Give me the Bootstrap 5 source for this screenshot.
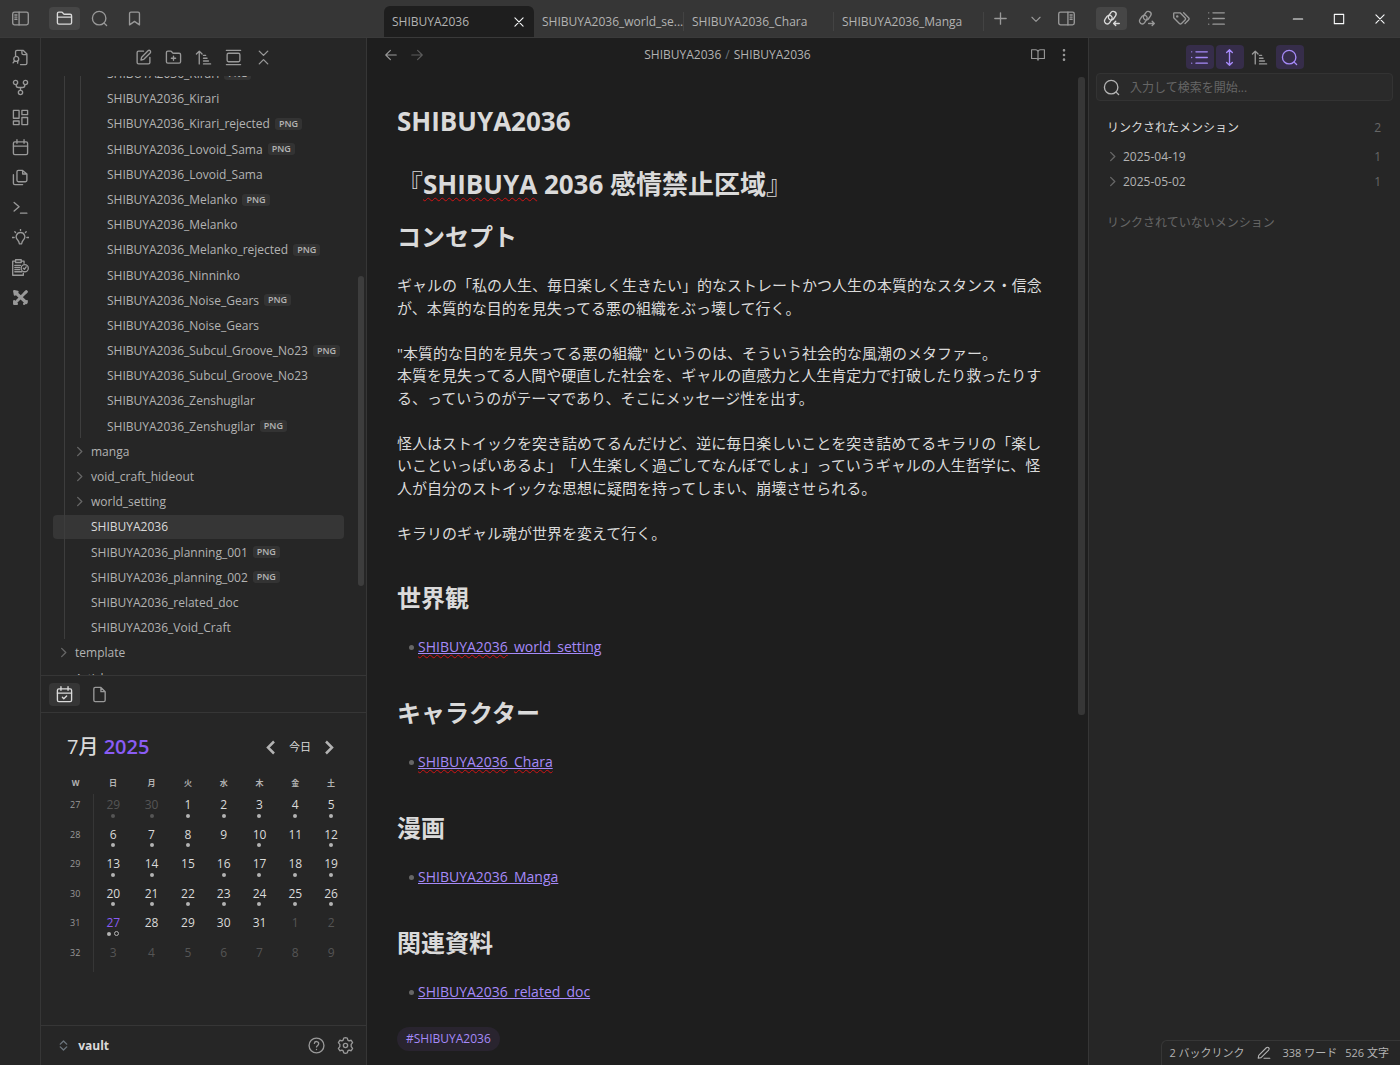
<!DOCTYPE html>
<html lang="ja">
<head>
<meta charset="utf-8">
<meta name="viewport" content="width=device-width, initial-scale=1">
<title>SHIBUYA2036 - vault</title>
<link rel="stylesheet" href="https://cdn.jsdelivr.net/npm/bootstrap@5.3.0/dist/css/bootstrap.min.css">
<style>
:root{--bg1:#1e1e1e;--bg2:#262626;--line:#363636;--txt:#dadada;--muted:#b3b3b3;--faint:#666;--accent:#8a5cf5;--link:#a68af9}
body{font-family:"Open Sans","Noto Sans CJK JP",sans-serif;font-size:12px;line-height:1.5;background:var(--bg1);color:var(--txt);text-spacing-trim:space-all}
button{font:inherit;color:inherit;background:none;border:0;padding:0}
a{color:inherit;text-decoration:none}
.ico{width:17px;height:17px;fill:none;stroke:currentColor;stroke-width:1.9;stroke-linecap:round;stroke-linejoin:round;display:block;flex:none}
.ico-s{width:14px;height:14px}
.ico-xs{width:11px;height:11px;stroke-width:3}
.ibtn{display:flex;align-items:center;justify-content:center;color:#999;border-radius:4px;flex:none}
.tabi{width:31px;height:23px}
.tabi.on{background:#464646;color:var(--txt)}
.lower .tabi.on{background:var(--line)}
.topbar{height:38px;background:#363636;border-bottom:1px solid #3a3a3a}
.toggle{margin:0 13px 0 5px}
.tabs{padding-left:17px}
.tabtools{padding-right:6px}
.winctl .ibtn{width:41px;height:23px}
.leftw{width:367px}
.rightw{width:312px}
.ribbon{width:41px;border-right:1px solid var(--line);background:var(--bg2);padding-top:10px;gap:11px}
.ribbon .ibtn{width:30px;height:19px}
.side{background:var(--bg2);border-right:1px solid var(--line)}
.tab{width:150px;height:31px;padding-left:8px;color:var(--muted)}
.tab.live{background:var(--bg1);border-radius:6px 6px 0 0}
.tab.sep::after{content:"";width:1px;height:19px;background:#434343;margin-left:auto}
.thead{height:38px;gap:13px}
.tree{margin-top:-14px;padding-left:12px}
.trow{display:flex;align-items:center;line-height:1.6;padding:2px 0;margin-bottom:2px;color:var(--muted);border-radius:4px;white-space:nowrap}
.trow.live{background:var(--line);color:var(--txt)}
.lv1{padding-left:22px}.lv2{padding-left:38px}.lv3{padding-left:54px}
.fold1{padding-left:5px}.fold2{padding-left:21px}
.fold1 svg,.fold2 svg{margin-right:6px;color:#666}
.kids{position:relative}
.kids::before{content:"";position:absolute;top:0;bottom:0;width:1px;background:#3d3d3d}
.k1::before{left:11px}.k2::before{left:27px}
.ext{font-size:9px;font-weight:600;line-height:12px;background:#333;border-radius:3px;padding:0 4px;margin-left:5px}
.treebox{height:599px}
.gutter{width:22px;padding:200px 2px 0 0}
.thumb{width:6px;height:310px;border-radius:3px;background:#3d3d3d}
.lower{height:38px;border-top:1px solid var(--line);border-bottom:1px solid var(--line);padding-left:8px;gap:4px}
.cal{padding:18px 17px 0}
.calhead{padding:0 11px 0 9px}
.cal h2{font-size:20px;font-weight:500;line-height:32px;margin:0}
.cal h2 span{color:var(--accent);font-weight:600}
.now{font-size:11px;margin:0 13px}
.caltab{width:100%;table-layout:fixed;text-align:center;margin-top:12px}
.caltab th{font-size:8px;line-height:16px;height:19px;vertical-align:top;color:var(--muted);font-weight:700;padding:0}
.caltab td{padding:3px 0 5px;line-height:1.3;vertical-align:top}
.caltab td.wk{font-size:9px;line-height:16px;color:#999;border-right:1px solid var(--line)}
.caltab .out{color:#555}
.caltab .today{color:var(--accent)}
.dots{height:6px;display:flex;align-items:center;justify-content:center;gap:3px}
.dots i{width:4px;height:4px;border-radius:50%;background:var(--muted)}
.dots i.ring{width:5px;height:5px;background:none;border:1px solid var(--muted)}
.out .dots i{background:#555}
.vault{height:40px;border-top:1px solid var(--line);padding:0 12px 0 17px}
.mhead{height:34px;padding:0 17px;color:var(--muted)}
.note{padding:33px 30px 0;font-size:15px}
.note h1{font-size:26px;font-weight:700;line-height:32px;margin:0 0 31px}
.note h1 span.br{font-weight:400}
.note h1.second{margin-bottom:22px}
.note h2{font-size:24px;font-weight:700;line-height:29px;margin:0 0 23px}
.note p{margin:0 0 1.5em}
.note section{margin-top:39px}
.note ul{margin:0;padding:0;list-style:none}
.note li{font-size:14px;line-height:24px;display:flex;align-items:center;gap:4px;padding-left:12px}
.note li::before{content:"";width:5px;height:5px;border-radius:50%;background:#666}
.note li a{color:var(--link);text-decoration:underline}
.sp{text-decoration:underline wavy #d01414 1px;text-underline-offset:3px}
.note li .sp{text-underline-offset:2px}
.note .last{margin-bottom:0}
.hashtag{display:inline-block;margin-top:23px;height:24px;line-height:24px;border-radius:12px;padding:0 9px;font-size:12px;background:#29242f;color:var(--link)}
.mgutter{width:12px;padding:5px 0 0 2px}
.mthumb{width:7px;height:638px;border-radius:3px;background:#363636}
.pane{background:var(--bg2);border-left:1px solid var(--line)}
.ptool{gap:2px;padding-top:7px}
.ptool .ibtn{width:28px;height:24px}
.ptool .on{background:#362d4a;color:var(--link)}
.find{margin:4px 7px 0 7px;height:28px;border:1px solid #333;border-radius:4px;background:#2a2a2a;padding:0 6px;gap:10px;color:var(--muted)}
.find input{background:none;border:0;outline:0;color:var(--txt);font:inherit;padding:2px 0 0}
.find input::placeholder{color:#666;opacity:1}
.ment{padding:14px 19px 0 18px}
.ment>div{height:25px;color:var(--muted)}
.ment>div:first-child{color:var(--txt)}
.ment svg{margin-right:5px;color:var(--faint)}
.cnt,.ment>div.dim{color:var(--faint)}
.status{border:1px solid var(--line);border-right:0;border-bottom:0;border-radius:6px 0 0 0;height:25px;padding:0 11px 0 7px;color:var(--muted);font-size:11px}
.status svg{margin:0 12px}
</style>
<script src="https://cdn.jsdelivr.net/npm/bootstrap@5.3.0/dist/js/bootstrap.bundle.min.js"></script>
</head>
<body class="vh-100 d-flex flex-column overflow-hidden">
<svg class="d-none" xmlns="http://www.w3.org/2000/svg">
<symbol id="panel-l" viewBox="0 0 24 24"><rect x="1" y="3" width="22" height="18" rx="2.5"/><path d="M10 3v18M4 7h3M4 10h3M4 13h3"/></symbol>
<symbol id="panel-r" viewBox="0 0 24 24"><rect x="1" y="3" width="22" height="18" rx="2.5"/><path d="M14 3v18M17 7h3M17 10h3M17 13h3"/></symbol>
<symbol id="folder" viewBox="0 0 24 24"><path d="M4 20h16a2 2 0 0 0 2-2V8a2 2 0 0 0-2-2h-7.900a2 2 0 0 1-1.700-.9l-.8-1.200A2 2 0 0 0 7.900 3H4a2 2 0 0 0-2 2v13a2 2 0 0 0 2 2ZM2 10h20"/></symbol>
<symbol id="search" viewBox="0 0 24 24"><circle cx="11.500" cy="11.500" r="9.500"/><path d="m18.500 18.500 3.500 3.500"/></symbol>
<symbol id="mark-i" viewBox="0 0 24 24"><path d="m19 21-7-5-7 5V5a2 2 0 0 1 2-2h10a2 2 0 0 1 2 2z"/></symbol>
<symbol id="filesearch" viewBox="0 0 24 24"><path d="M14 2v4a2 2 0 0 0 2 2h5M5 9V4a2 2 0 0 1 2-2h9l5 5v13a2 2 0 0 1-2 2h-7"/><circle cx="6" cy="14" r="3.500"/><path d="m3.500 17-2 2.500M8 17v3"/></symbol>
<symbol id="fork" viewBox="0 0 24 24"><circle cx="12" cy="19" r="3"/><circle cx="5" cy="5" r="3"/><circle cx="19" cy="5" r="3"/><path d="M18 8v1a3 3 0 0 1-3 3H9a3 3 0 0 1-3-3V8M12 12v4"/></symbol>
<symbol id="dash" viewBox="0 0 24 24"><rect x="2" y="2" width="8" height="11"/><rect x="14" y="2" width="8" height="6"/><rect x="14" y="12" width="8" height="10"/><rect x="2" y="17" width="8" height="5"/></symbol>
<symbol id="calendar" viewBox="0 0 24 24"><rect x="2" y="4" width="20" height="18" rx="2"/><path d="M7 1v5M17 1v5M2 10h20"/></symbol>
<symbol id="files" viewBox="0 0 24 24"><path d="M15 2H9a2 2 0 0 0-2 2v12a2 2 0 0 0 2 2h10a2 2 0 0 0 2-2V7zM15 2v5h5M2 8v12a2 2 0 0 0 2 2h11"/></symbol>
<symbol id="term" viewBox="0 0 24 24"><path d="m3 17 7-6-7-6M12 20h9"/></symbol>
<symbol id="bulb" viewBox="0 0 24 24"><path d="M12 5a6 6 0 0 0-4 10.500c1.500 1.500 2 3 2.500 5.500h3c.5-2.500 1-4 2.500-5.500A6 6 0 0 0 12 5ZM12 0v2M4 4l1 1M20 4l-1 1M0 12h3M21 12h3"/></symbol>
<symbol id="cliplist" viewBox="0 0 24 24"><path d="M16 20v3H1V3h4M13 3h4v3M5 1h8v4H5zM4 9h8M4 12h7M4 15h7M4 18h10"/><circle cx="18" cy="13" r="5"/><path d="m16 13 1.500 1.500L20 11"/></symbol>
<symbol id="tools" viewBox="0 0 24 24"><path d="M6 6 20 19" stroke-width="4.500"/><path d="M19 5 5 19" stroke-width="4"/><path d="M3 3l5 1-4 4ZM20 3l1 1-4 3ZM17 21l4-4M3 17v4h4" stroke-width="3"/></symbol>
<symbol id="edit" viewBox="0 0 24 24"><path d="M12 3H5a2 2 0 0 0-2 2v14a2 2 0 0 0 2 2h14a2 2 0 0 0 2-2v-7M18.400 2.600a2.100 2.100 0 0 1 3 3L12.400 14.600 8.500 15.500l.9-3.900Z"/></symbol>
<symbol id="fplus" viewBox="0 0 24 24"><path d="M4 20h16a2 2 0 0 0 2-2V8a2 2 0 0 0-2-2h-7.900a2 2 0 0 1-1.700-.9l-.8-1.200A2 2 0 0 0 7.900 3H4a2 2 0 0 0-2 2v13a2 2 0 0 0 2 2ZM12 10v6M9 13h6"/></symbol>
<symbol id="sort" viewBox="0 0 24 24"><path d="m2 7 4-4 4 4M6 3v18M12 9h3M12 13h5M12 17h7M12 21h10"/></symbol>
<symbol id="gallery" viewBox="0 0 24 24"><rect x="3" y="6" width="18" height="12" rx="2"/><path d="M2 2h20M2 22h20"/></symbol>
<symbol id="collapse" viewBox="0 0 24 24"><path d="m6 21 6-6 6 6M6 3l6 6 6-6"/></symbol>
<symbol id="chev" viewBox="0 0 24 24"><path d="m8 3 9 9-9 9"/></symbol>
<symbol id="down" viewBox="0 0 24 24"><path d="m5 9 7 7 7-7"/></symbol>
<symbol id="x" viewBox="0 0 24 24"><path d="M5 5l14 14M19 5 5 19"/></symbol>
<symbol id="plus" viewBox="0 0 24 24"><path d="M4 12h16M12 4v16"/></symbol>
<symbol id="al" viewBox="0 0 24 24"><path d="m11 4-8 8 8 8M3 12h18"/></symbol>
<symbol id="ar" viewBox="0 0 24 24"><path d="m13 4 8 8-8 8M21 12H3"/></symbol>
<symbol id="book" viewBox="0 0 24 24"><path d="M1 3h7a4 4 0 0 1 4 4v14a3 3 0 0 0-3-3H1zM23 3h-7a4 4 0 0 0-4 4v14a3 3 0 0 1 3-3h8z"/></symbol>
<symbol id="more" viewBox="0 0 24 24"><g fill="currentColor"><circle cx="12" cy="4" r="1.300"/><circle cx="12" cy="12" r="1.300"/><circle cx="12" cy="20" r="1.300"/></g></symbol>
<symbol id="chain" viewBox="0 0 24 24"><rect x="9" y="1.500" width="8" height="13" rx="4" transform="rotate(35 13 8)"/><rect x="3.500" y="7" width="8" height="13" rx="4" transform="rotate(35 7.500 13.500)"/></symbol>
<symbol id="lin" viewBox="0 0 24 24"><use href="#chain"/><path d="M23 19h-8M18 16l-3 3 3 3"/></symbol>
<symbol id="lout" viewBox="0 0 24 24"><use href="#chain"/><path d="M15 19h8M20 16l3 3-3 3"/></symbol>
<symbol id="tags" viewBox="0 0 24 24"><path d="M1 5v6l8 8c1 1 2 1 3 0l5-5c1-1 1-2 0-3L10 4H2a1 1 0 0 0-1 1ZM15 4l7 7c1 1 1 2 0 3l-5 5"/><circle cx="6" cy="9" r=".8"/></symbol>
<symbol id="list" viewBox="0 0 24 24"><path d="M7 4h16M7 12h16M7 20h16M1 4h.01M1 12h.01M1 20h.01"/></symbol>
<symbol id="updown" viewBox="0 0 24 24"><path d="m8 5 4-4 4 4M8 19l4 4 4-4M12 1v22"/></symbol>
<symbol id="min" viewBox="0 0 24 24"><path d="M4 12h16"/></symbol>
<symbol id="max" viewBox="0 0 24 24"><path d="M4 4h16v16H4z"/></symbol>
<symbol id="calcheck" viewBox="0 0 24 24"><rect x="2" y="4" width="20" height="18" rx="2"/><path d="M7 1v5M17 1v5M2 10h20M9 16l2 2 4-4"/></symbol>
<symbol id="file" viewBox="0 0 24 24"><path d="M14 2H6a2 2 0 0 0-2 2v16a2 2 0 0 0 2 2h12a2 2 0 0 0 2-2V8zM14 2v6h6"/></symbol>
<symbol id="ud" viewBox="0 0 24 24"><path d="m5 15 7 7 7-7M5 9l7-7 7 7"/></symbol>
<symbol id="help" viewBox="0 0 24 24"><circle cx="12" cy="12" r="10.500"/><path d="M9 9a3 3 0 0 1 6 1c0 2-3 2.500-3 4M12 17.500v.1"/></symbol>
<symbol id="gear" viewBox="0 0 24 24"><path d="m12 1 2.500.5.8 3 1.700 1 3-.9 2 3.400-2 2.500v3l2 2.500-2 3.400-3-.9-1.700 1-.8 3L12 23l-2.500-.5-.8-3-1.700-1-3 .9-2-3.400 2-2.500v-3L2 8l2-3.400 3 .9 1.700-1 .8-3Z"/><circle cx="12" cy="12" r="3"/></symbol>
<symbol id="pen" viewBox="0 0 24 24"><path d="M12 21h10M16 3a2.500 2.500 0 0 1 4 4L7 20l-5 1 1-5Z"/></symbol>
</svg>

<header class="topbar d-flex flex-shrink-0">
  <div class="leftw d-flex align-items-center flex-shrink-0">
    <button class="ibtn tabi toggle" aria-label="サイドバー"><svg class="ico"><use href="#panel-l"/></svg></button>
    <button class="ibtn tabi on me-1" aria-label="ファイル"><svg class="ico"><use href="#folder"/></svg></button>
    <button class="ibtn tabi me-1" aria-label="検索"><svg class="ico"><use href="#search"/></svg></button>
    <button class="ibtn tabi" aria-label="ブックマーク"><svg class="ico"><use href="#mark-i"/></svg></button>
  </div>
  <nav class="tabs d-flex flex-grow-1 align-items-end">
    <div class="tab live d-flex align-items-center"><a href="#">SHIBUYA2036</a><button class="ibtn ms-auto me-2" aria-label="閉じる"><svg class="ico ico-s text-light"><use href="#x"/></svg></button></div>
    <div class="tab sep d-flex align-items-center"><a href="#" class="text-nowrap">SHIBUYA2036_world_se...</a></div>
    <div class="tab sep d-flex align-items-center"><a href="#">SHIBUYA2036_Chara</a></div>
    <div class="tab sep d-flex align-items-center"><a href="#">SHIBUYA2036_Manga</a></div>
    <div class="tabtools d-flex align-items-center align-self-center ms-auto">
      <button class="ibtn tabi me-1" aria-label="新規タブ"><svg class="ico"><use href="#plus"/></svg></button>
      <button class="ibtn tabi" aria-label="タブ一覧"><svg class="ico ico-s"><use href="#down"/></svg></button>
      <button class="ibtn tabi" aria-label="右サイドバー"><svg class="ico"><use href="#panel-r"/></svg></button>
    </div>
  </nav>
  <div class="rightw d-flex align-items-center flex-shrink-0 ps-2">
    <button class="ibtn tabi on me-1" aria-label="バックリンク"><svg class="ico"><use href="#lin"/></svg></button>
    <button class="ibtn tabi me-1" aria-label="外部リンク"><svg class="ico"><use href="#lout"/></svg></button>
    <button class="ibtn tabi me-1" aria-label="タグ"><svg class="ico"><use href="#tags"/></svg></button>
    <button class="ibtn tabi" aria-label="アウトライン"><svg class="ico"><use href="#list"/></svg></button>
    <div class="winctl d-flex ms-auto text-light">
      <button class="ibtn text-reset" aria-label="最小化"><svg class="ico ico-s"><use href="#min"/></svg></button>
      <button class="ibtn text-reset" aria-label="最大化"><svg class="ico ico-s"><use href="#max"/></svg></button>
      <button class="ibtn text-reset" aria-label="終了"><svg class="ico ico-s"><use href="#x"/></svg></button>
    </div>
  </div>
</header>

<div class="d-flex flex-grow-1 overflow-hidden">
  <div class="leftw d-flex flex-shrink-0">
    <nav class="ribbon d-flex flex-column align-items-center flex-shrink-0">
      <button class="ibtn" aria-label="クイックスイッチャー"><svg class="ico"><use href="#filesearch"/></svg></button>
      <button class="ibtn" aria-label="グラフ"><svg class="ico"><use href="#fork"/></svg></button>
      <button class="ibtn" aria-label="キャンバス"><svg class="ico"><use href="#dash"/></svg></button>
      <button class="ibtn" aria-label="デイリーノート"><svg class="ico"><use href="#calendar"/></svg></button>
      <button class="ibtn" aria-label="テンプレート"><svg class="ico"><use href="#files"/></svg></button>
      <button class="ibtn" aria-label="コマンド"><svg class="ico"><use href="#term"/></svg></button>
      <button class="ibtn" aria-label="ヒント"><svg class="ico"><use href="#bulb"/></svg></button>
      <button class="ibtn" aria-label="タスク"><svg class="ico"><use href="#cliplist"/></svg></button>
      <button class="ibtn" aria-label="ツール"><svg class="ico"><use href="#tools"/></svg></button>
    </nav>
    <aside class="side d-flex flex-column flex-grow-1">
      <div class="thead d-flex align-items-center justify-content-center flex-shrink-0">
        <button class="ibtn" aria-label="新規ノート"><svg class="ico"><use href="#edit"/></svg></button>
        <button class="ibtn" aria-label="新規フォルダ"><svg class="ico"><use href="#fplus"/></svg></button>
        <button class="ibtn" aria-label="並べ替え"><svg class="ico"><use href="#sort"/></svg></button>
        <button class="ibtn" aria-label="自動表示"><svg class="ico"><use href="#gallery"/></svg></button>
        <button class="ibtn" aria-label="折りたたむ"><svg class="ico"><use href="#collapse"/></svg></button>
      </div>
      <div class="treebox d-flex overflow-hidden flex-shrink-0">
        <div class="tree flex-grow-1">
          <div class="kids k1">
            <div class="kids k2">
              <a href="#" class="trow lv3">SHIBUYA2036_Kirari<span class="ext">PNG</span></a>
              <a href="#" class="trow lv3">SHIBUYA2036_Kirari</a>
              <a href="#" class="trow lv3">SHIBUYA2036_Kirari_rejected<span class="ext">PNG</span></a>
              <a href="#" class="trow lv3">SHIBUYA2036_Lovoid_Sama<span class="ext">PNG</span></a>
              <a href="#" class="trow lv3">SHIBUYA2036_Lovoid_Sama</a>
              <a href="#" class="trow lv3">SHIBUYA2036_Melanko<span class="ext">PNG</span></a>
              <a href="#" class="trow lv3">SHIBUYA2036_Melanko</a>
              <a href="#" class="trow lv3">SHIBUYA2036_Melanko_rejected<span class="ext">PNG</span></a>
              <a href="#" class="trow lv3">SHIBUYA2036_Ninninko</a>
              <a href="#" class="trow lv3">SHIBUYA2036_Noise_Gears<span class="ext">PNG</span></a>
              <a href="#" class="trow lv3">SHIBUYA2036_Noise_Gears</a>
              <a href="#" class="trow lv3">SHIBUYA2036_Subcul_Groove_No23<span class="ext">PNG</span></a>
              <a href="#" class="trow lv3">SHIBUYA2036_Subcul_Groove_No23</a>
              <a href="#" class="trow lv3">SHIBUYA2036_Zenshugilar</a>
              <a href="#" class="trow lv3">SHIBUYA2036_Zenshugilar<span class="ext">PNG</span></a>
            </div>
            <a href="#" class="trow fold2"><svg class="ico ico-xs"><use href="#chev"/></svg>manga</a>
            <a href="#" class="trow fold2"><svg class="ico ico-xs"><use href="#chev"/></svg>void_craft_hideout</a>
            <a href="#" class="trow fold2"><svg class="ico ico-xs"><use href="#chev"/></svg>world_setting</a>
            <a href="#" class="trow lv2 live">SHIBUYA2036</a>
            <a href="#" class="trow lv2">SHIBUYA2036_planning_001<span class="ext">PNG</span></a>
            <a href="#" class="trow lv2">SHIBUYA2036_planning_002<span class="ext">PNG</span></a>
            <a href="#" class="trow lv2">SHIBUYA2036_related_doc</a>
            <a href="#" class="trow lv2">SHIBUYA2036_Void_Craft</a>
          </div>
          <a href="#" class="trow fold1"><svg class="ico ico-xs"><use href="#chev"/></svg>template</a>
          <a href="#" class="trow lv1">Article</a>
        </div>
        <div class="gutter d-flex justify-content-end flex-shrink-0"><div class="thumb"></div></div>
      </div>
      <div class="lower d-flex align-items-center flex-shrink-0">
        <button class="ibtn tabi on" aria-label="カレンダー"><svg class="ico"><use href="#calcheck"/></svg></button>
        <button class="ibtn tabi" aria-label="ファイル"><svg class="ico"><use href="#file"/></svg></button>
      </div>
      <div class="cal flex-grow-1">
        <div class="calhead d-flex align-items-center">
          <h2 class="me-auto">7月 <span>2025</span></h2>
          <button aria-label="前月"><svg class="d-block" width="10" height="15" viewBox="0 0 10 15" fill="none" stroke="#b3b3b3" stroke-width="2.500"><path d="M8 1.500 2 7.500l6 6"/></svg></button>
          <button class="now">今日</button>
          <button class="me-1" aria-label="翌月"><svg class="d-block" width="10" height="15" viewBox="0 0 10 15" fill="none" stroke="#b3b3b3" stroke-width="2.500"><path d="m2 1.500 6 6-6 6"/></svg></button>
        </div>
        <table class="caltab">
          <colgroup><col style="width:35px"><col style="width:40px"><col style="width:37px"><col><col><col><col><col></colgroup>
          <thead><tr><th>W</th><th>日</th><th>月</th><th>火</th><th>水</th><th>木</th><th>金</th><th>土</th></tr></thead>
          <tbody>
            <tr><td class="wk">27</td><td class="out">29<div class="dots"><i></i></div></td><td class="out">30<div class="dots"><i></i></div></td><td>1<div class="dots"><i></i></div></td><td>2<div class="dots"><i></i></div></td><td>3<div class="dots"><i></i></div></td><td>4<div class="dots"><i></i></div></td><td>5<div class="dots"><i></i></div></td></tr>
            <tr><td class="wk">28</td><td>6<div class="dots"><i></i></div></td><td>7<div class="dots"><i></i></div></td><td>8<div class="dots"><i></i></div></td><td>9</td><td>10<div class="dots"><i></i></div></td><td>11</td><td>12<div class="dots"><i></i></div></td></tr>
            <tr><td class="wk">29</td><td>13<div class="dots"><i></i></div></td><td>14<div class="dots"><i></i></div></td><td>15</td><td>16<div class="dots"><i></i></div></td><td>17<div class="dots"><i></i></div></td><td>18<div class="dots"><i></i></div></td><td>19<div class="dots"><i></i></div></td></tr>
            <tr><td class="wk">30</td><td>20<div class="dots"><i></i></div></td><td>21<div class="dots"><i></i></div></td><td>22<div class="dots"><i></i></div></td><td>23<div class="dots"><i></i></div></td><td>24<div class="dots"><i></i></div></td><td>25<div class="dots"><i></i></div></td><td>26<div class="dots"><i></i></div></td></tr>
            <tr><td class="wk">31</td><td class="today">27<div class="dots"><i></i><i class="ring"></i></div></td><td>28</td><td>29</td><td>30</td><td>31</td><td class="out">1</td><td class="out">2</td></tr>
            <tr><td class="wk">32</td><td class="out">3<div class="dots"></div></td><td class="out">4</td><td class="out">5</td><td class="out">6</td><td class="out">7</td><td class="out">8</td><td class="out">9</td></tr>
          </tbody>
        </table>
      </div>
      <div class="vault d-flex align-items-center flex-shrink-0">
        <svg class="ico ico-xs text-secondary"><use href="#ud"/></svg>
        <button class="ms-2 me-auto fw-bold">&#8202;vault</button>
        <button class="ibtn me-2" aria-label="ヘルプ"><svg class="ico"><use href="#help"/></svg></button>
        <button class="ibtn ms-1" aria-label="設定"><svg class="ico"><use href="#gear"/></svg></button>
      </div>
    </aside>
  </div>

  <main class="flex-grow-1 d-flex flex-column overflow-hidden">
    <div class="mhead d-flex align-items-center flex-shrink-0">
      <button class="ibtn" aria-label="戻る"><svg class="ico ico-s"><use href="#al"/></svg></button>
      <button class="ibtn ms-2 ps-1 opacity-50" aria-label="進む"><svg class="ico ico-s"><use href="#ar"/></svg></button>
      <div class="flex-grow-1 text-center"><a href="#">SHIBUYA2036</a><span class="px-1 text-secondary">/</span><span>SHIBUYA2036</span></div>
      <button class="ibtn me-2" aria-label="閲覧"><svg class="ico ico-s"><use href="#book"/></svg></button>
      <button class="ibtn ms-1" aria-label="その他"><svg class="ico ico-s"><use href="#more"/></svg></button>
    </div>
    <div class="d-flex flex-grow-1 overflow-hidden">
      <article class="note flex-grow-1">
        <h1>SHIBUYA2036</h1>
        <h1 class="second"><span class="br">『</span><span class="sp">SHIBUYA</span> 2036 感情禁止区域<span class="br">』</span></h1>
        <h2>コンセプト</h2>
        <p>ギャルの「私の人生、毎日楽しく生きたい」的なストレートかつ人生の本質的なスタンス・信念が、本質的な目的を見失ってる悪の組織をぶっ壊して行く。</p>
        <p>"本質的な目的を見失ってる悪の組織" というのは、そういう社会的な風潮のメタファー。<br>本質を見失ってる人間や硬直した社会を、ギャルの直感力と人生肯定力で打破したり救ったりする、っていうのがテーマであり、そこにメッセージ性を出す。</p>
        <p>怪人はストイックを突き詰めてるんだけど、逆に毎日楽しいことを突き詰めてるキラリの「楽しいこといっぱいあるよ」「人生楽しく過ごしてなんぼでしょ」っていうギャルの人生哲学に、怪人が自分のストイックな思想に疑問を持ってしまい、崩壊させられる。</p>
        <p class="last">キラリのギャル魂が世界を変えて行く。</p>
        <section><h2>世界観</h2><ul><li><a href="#"><span class="sp">SHIBUYA2036</span>_world_setting</a></li></ul></section>
        <section><h2>キャラクター</h2><ul><li><a href="#"><span class="sp">SHIBUYA2036</span>_<span class="sp">Chara</span></a></li></ul></section>
        <section><h2>漫画</h2><ul><li><a href="#">SHIBUYA2036_Manga</a></li></ul></section>
        <section><h2>関連資料</h2><ul><li><a href="#">SHIBUYA2036_related_doc</a></li></ul></section>
        <a href="#" class="hashtag">#SHIBUYA2036</a>
      </article>
      <div class="mgutter flex-shrink-0"><div class="mthumb"></div></div>
    </div>
  </main>

  <aside class="pane rightw d-flex flex-column flex-shrink-0">
    <div class="ptool d-flex justify-content-center">
      <button class="ibtn on" aria-label="折りたたむ"><svg class="ico"><use href="#list"/></svg></button>
      <button class="ibtn on" aria-label="展開"><svg class="ico"><use href="#updown"/></svg></button>
      <button class="ibtn" aria-label="並べ替え"><svg class="ico"><use href="#sort"/></svg></button>
      <button class="ibtn on" aria-label="検索"><svg class="ico"><use href="#search"/></svg></button>
    </div>
    <label class="find d-flex align-items-center"><svg class="ico"><use href="#search"/></svg><input class="flex-grow-1" type="text" placeholder="入力して検索を開始..." aria-label="検索"></label>
    <div class="ment">
      <div class="d-flex align-items-center justify-content-between mb-1"><span>リンクされたメンション</span><span class="cnt">2</span></div>
      <div class="d-flex align-items-center"><svg class="ico ico-xs"><use href="#chev"/></svg>2025-04-19<span class="cnt ms-auto">1</span></div>
      <div class="d-flex align-items-center"><svg class="ico ico-xs"><use href="#chev"/></svg>2025-05-02<span class="cnt ms-auto">1</span></div>
      <div class="dim d-flex align-items-center mt-3">リンクされていないメンション</div>
    </div>
    <footer class="status d-flex align-items-center mt-auto ms-auto"><span>2 バックリンク</span><svg class="ico ico-s"><use href="#pen"/></svg><span class="me-2">338 ワード</span><span>526 文字</span></footer>
  </aside>
</div>
</body>
</html>
